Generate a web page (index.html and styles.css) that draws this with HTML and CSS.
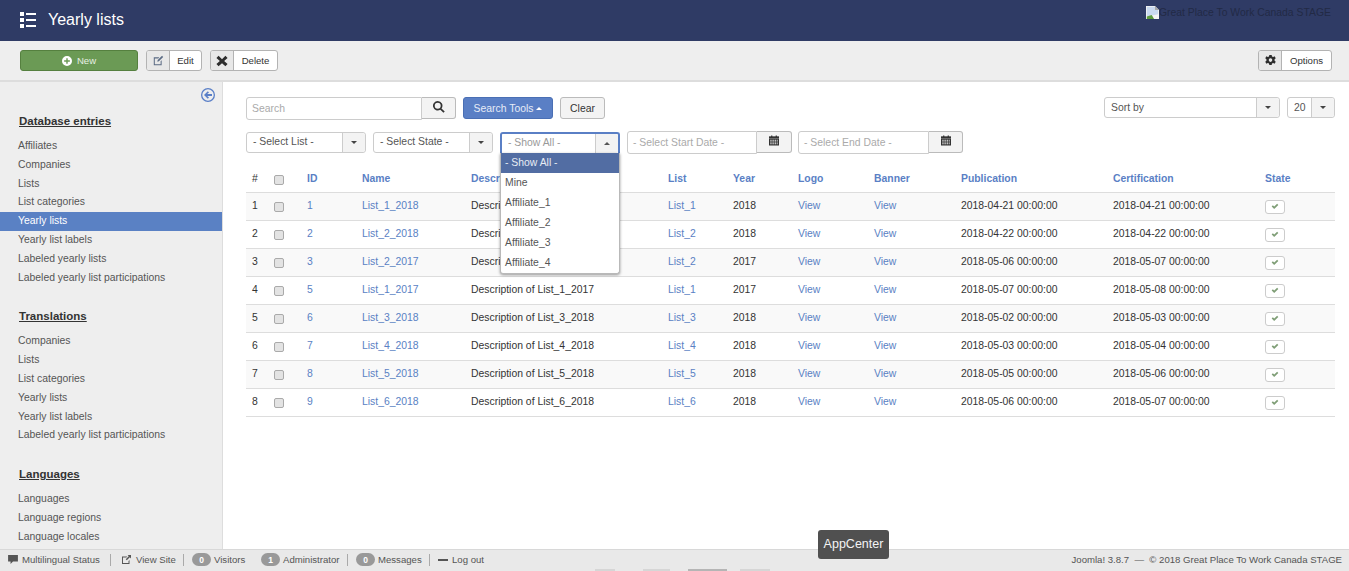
FILE: index.html
```html
<!DOCTYPE html>
<html lang="en">
<head>
  <meta charset="utf-8" />
  <title>Yearly lists</title>
  <link rel="stylesheet" href="styles.css">
</head>
<body>
<svg class="sprite" width="0" height="0">
  <symbol id="i-list" viewBox="0 0 16 16"><path d="M0 0h4v4H0zM0 6h4v4H0zM0 12h4v4H0zM6 1h10v2H6zM6 7h10v2H6zM6 13h10v2H6z"/></symbol>
  <symbol id="i-plus" viewBox="0 0 14 14"><path fill-rule="evenodd" d="M7 0a7 7 0 1 0 0 14A7 7 0 0 0 7 0zM6 3h2v3h3v2H8v3H6V8H3V6h3z"/></symbol>
  <symbol id="i-edit" viewBox="0 0 14 14"><path d="M1 3h7L6.700 4.300H2.300v7.400h7.400V8L11 6.700V13H1z"/><path d="M11.500 1L13 2.500 7.500 8 5.500 8.500 6 6.500z"/></symbol>
  <symbol id="i-x" viewBox="0 0 14 14"><path d="M3 1l4 4 4-4 2.500 2.500-4 3.500 4 3.500L11 13 7 9.500 3 13 .5 10.500l4-3.500-4-3.500z"/></symbol>
  <symbol id="i-gear" viewBox="0 0 14 14"><path fill-rule="evenodd" d="M5.500 0h3l.4 2 1.500.7L12.200 1.600l1.500 2.600-1.500 1.300v1.800l1.500 1.300-1.500 2.600-1.800-1.100-1.500.7-.4 2h-3l-.4-2-1.500-.7-1.800 1.100L.3 8.600 1.800 7.300V5.500L.3 4.200l1.500-2.600 1.800 1.100 1.500-.7zM7 4.200a2.300 2.300 0 1 0 0 4.600 2.300 2.300 0 0 0 0-4.600z"/></symbol>
  <symbol id="i-search" viewBox="0 0 14 14"><path fill-rule="evenodd" d="M5.500 0a5.500 5.500 0 0 1 4.400 8.800l3.800 3.500-1.500 1.500-3.700-3.700A5.500 5.500 0 1 1 5.500 0zm0 2a3.500 3.500 0 1 0 0 7 3.500 3.500 0 0 0 0-7z"/></symbol>
  <symbol id="i-cal" viewBox="0 0 12 12"><path d="M0 1h12v2.500H0z"/><path fill-rule="evenodd" d="M0 3.500h12V12H0zM1.500 5v1.200h1.700V5zm2.600 0v1.200h1.700V5zm2.600 0v1.200h1.700V5zm2.500 0v1.200h1.300V5zM1.500 7.200v1.200h1.700V7.200zm2.600 0v1.200h1.700V7.200zm2.600 0v1.200h1.700V7.200zm2.500 0v1.200h1.300V7.200zM1.500 9.400v1.200h1.700V9.400zm2.600 0v1.200h1.700V9.400zm2.600 0v1.200h1.700V9.400zm2.500 0v1.200h1.300V9.400z"/><path d="M2.500 0h1.500v2H2.500zM8 0h1.500v2H8z"/></symbol>
  <symbol id="i-check" viewBox="0 0 12 10"><path d="M1 5l1.800-1.800L4.800 5 9.200 .8 11 2.600 4.800 8.800z"/></symbol>
  <symbol id="i-back" viewBox="0 0 14 14"><path fill-rule="evenodd" d="M7 0a7 7 0 1 1 0 14A7 7 0 0 1 7 0zm0 1.300a5.700 5.700 0 1 0 0 11.400A5.700 5.700 0 0 0 7 1.300z"/><path d="M6.800 3.200l1.200 1.200L6.200 6H11v2H6.200L8 9.600l-1.200 1.200L3 7z"/></symbol>
  <symbol id="i-chat" viewBox="0 0 12 11"><path d="M0 0h12v8H6l-3 3V8H0z"/></symbol>
  <symbol id="i-out" viewBox="0 0 12 12"><path d="M0 2h7L5.800 3.300H1.300v7.400h7.400V8L10 6.700V12H0z"/><path d="M7.500 0H12v4.500l-1.600-1.400-4 4-1.400-1.400 4-4z"/></symbol>
</svg>

<div class="page">
  <header class="topbar">
    <svg class="topbar-icon"><use href="#i-list"/></svg>
    <h1 class="page-title">Yearly lists</h1>
    <div class="brand">
      <svg class="broken-img" viewBox="0 0 16 16">
        <path fill="#f4f4f4" d="M0 0h11l5 5v11H0z"/>
        <path fill="#c9d9f0" d="M1 1h10v4h4v5L1 13z"/>
        <path fill="#5c9a3c" d="M1 13l6-2 3 5H1z"/>
        <path fill="#a8a8a8" d="M11 0l5 5h-5z"/>
      </svg>
      <span>Great Place To Work Canada STAGE</span>
    </div>
  </header>

  <div class="toolbar">
    <button class="tool tool-new"><svg class="ico-plus"><use href="#i-plus"/></svg>New</button>
    <button class="tool tool-edit"><span class="tool-ico"><svg class="ico-edit"><use href="#i-edit"/></svg></span><span class="tool-txt">Edit</span></button>
    <button class="tool tool-delete"><span class="tool-ico"><svg class="ico-x"><use href="#i-x"/></svg></span><span class="tool-txt">Delete</span></button>
    <button class="tool tool-options"><span class="tool-ico"><svg class="ico-gear"><use href="#i-gear"/></svg></span><span class="tool-txt">Options</span></button>
  </div>

  <div class="body">
    <aside class="sidebar">
      <div class="collapse"><svg class="ico-back"><use href="#i-back"/></svg></div>
      <h3 class="nav-title">Database entries</h3>
      <ul class="nav">
        <li>Affiliates</li>
        <li>Companies</li>
        <li>Lists</li>
        <li>List categories</li>
        <li class="active">Yearly lists</li>
        <li>Yearly list labels</li>
        <li>Labeled yearly lists</li>
        <li>Labeled yearly list participations</li>
      </ul>
      <h3 class="nav-title">Translations</h3>
      <ul class="nav">
        <li>Companies</li>
        <li>Lists</li>
        <li>List categories</li>
        <li>Yearly lists</li>
        <li>Yearly list labels</li>
        <li>Labeled yearly list participations</li>
      </ul>
      <h3 class="nav-title">Languages</h3>
      <ul class="nav">
        <li>Languages</li>
        <li>Language regions</li>
        <li>Language locales</li>
      </ul>
    </aside>

    <main class="content">
      <div class="search-row">
        <div class="search-box">
          <div class="input search-input">Search</div>
          <div class="addon search-btn"><svg class="ico-search"><use href="#i-search"/></svg></div>
        </div>
        <button class="btn btn-primary">Search Tools <i class="caret-up white"></i></button>
        <button class="btn btn-clear">Clear</button>
        <div class="select sort-select"><span class="select-val">Sort by</span><span class="select-arrow"><i class="caret-down"></i></span></div>
        <div class="select limit-select"><span class="select-val">20</span><span class="select-arrow"><i class="caret-down"></i></span></div>
      </div>

      <div class="filter-row">
        <div class="select filter-select"><span class="select-val">- Select List -</span><span class="select-arrow"><i class="caret-down"></i></span></div>
        <div class="select filter-select"><span class="select-val">- Select State -</span><span class="select-arrow"><i class="caret-down"></i></span></div>
        <div class="filter-open">
          <div class="select filter-select is-open"><span class="select-val">- Show All -</span><span class="select-arrow"><i class="caret-up"></i></span></div>
          <ul class="dropdown">
            <li class="selected">- Show All -</li>
            <li>Mine</li>
            <li>Affiliate_1</li>
            <li>Affiliate_2</li>
            <li>Affiliate_3</li>
            <li>Affiliate_4</li>
          </ul>
        </div>
        <div class="date-box date-start">
          <div class="input date-input">- Select Start Date -</div>
          <div class="addon date-btn"><svg class="ico-cal"><use href="#i-cal"/></svg></div>
        </div>
        <div class="date-box date-end">
          <div class="input date-input">- Select End Date -</div>
          <div class="addon date-btn"><svg class="ico-cal"><use href="#i-cal"/></svg></div>
        </div>
      </div>

      <table class="grid">
        <colgroup>
          <col class="c-num"><col class="c-chk"><col class="c-id"><col class="c-name"><col class="c-desc"><col class="c-list"><col class="c-year"><col class="c-logo"><col class="c-banner"><col class="c-pub"><col class="c-cert"><col class="c-state">
        </colgroup>
        <thead>
          <tr>
            <th class="plain">#</th><th><input type="checkbox" class="chk chk-head"></th><th>ID</th><th>Name</th><th>Descr</th><th>List</th><th>Year</th><th>Logo</th><th>Banner</th><th>Publication</th><th>Certification</th><th>State</th>
          </tr>
        </thead>
        <tbody>
          <tr>
            <td>1</td><td><input type="checkbox" class="chk"></td><td><a>1</a></td><td><a>List_1_2018</a></td><td>Descri</td><td><a>List_1</a></td><td>2018</td><td><a>View</a></td><td><a>View</a></td><td>2018-04-21 00:00:00</td><td>2018-04-21 00:00:00</td><td><span class="state"><svg class="ico-check"><use href="#i-check"/></svg></span></td>
          </tr>
          <tr>
            <td>2</td><td><input type="checkbox" class="chk"></td><td><a>2</a></td><td><a>List_2_2018</a></td><td>Descri</td><td><a>List_2</a></td><td>2018</td><td><a>View</a></td><td><a>View</a></td><td>2018-04-22 00:00:00</td><td>2018-04-22 00:00:00</td><td><span class="state"><svg class="ico-check"><use href="#i-check"/></svg></span></td>
          </tr>
          <tr>
            <td>3</td><td><input type="checkbox" class="chk"></td><td><a>3</a></td><td><a>List_2_2017</a></td><td>Descri</td><td><a>List_2</a></td><td>2017</td><td><a>View</a></td><td><a>View</a></td><td>2018-05-06 00:00:00</td><td>2018-05-07 00:00:00</td><td><span class="state"><svg class="ico-check"><use href="#i-check"/></svg></span></td>
          </tr>
          <tr>
            <td>4</td><td><input type="checkbox" class="chk"></td><td><a>5</a></td><td><a>List_1_2017</a></td><td>Description of List_1_2017</td><td><a>List_1</a></td><td>2017</td><td><a>View</a></td><td><a>View</a></td><td>2018-05-07 00:00:00</td><td>2018-05-08 00:00:00</td><td><span class="state"><svg class="ico-check"><use href="#i-check"/></svg></span></td>
          </tr>
          <tr>
            <td>5</td><td><input type="checkbox" class="chk"></td><td><a>6</a></td><td><a>List_3_2018</a></td><td>Description of List_3_2018</td><td><a>List_3</a></td><td>2018</td><td><a>View</a></td><td><a>View</a></td><td>2018-05-02 00:00:00</td><td>2018-05-03 00:00:00</td><td><span class="state"><svg class="ico-check"><use href="#i-check"/></svg></span></td>
          </tr>
          <tr>
            <td>6</td><td><input type="checkbox" class="chk"></td><td><a>7</a></td><td><a>List_4_2018</a></td><td>Description of List_4_2018</td><td><a>List_4</a></td><td>2018</td><td><a>View</a></td><td><a>View</a></td><td>2018-05-03 00:00:00</td><td>2018-05-04 00:00:00</td><td><span class="state"><svg class="ico-check"><use href="#i-check"/></svg></span></td>
          </tr>
          <tr>
            <td>7</td><td><input type="checkbox" class="chk"></td><td><a>8</a></td><td><a>List_5_2018</a></td><td>Description of List_5_2018</td><td><a>List_5</a></td><td>2018</td><td><a>View</a></td><td><a>View</a></td><td>2018-05-05 00:00:00</td><td>2018-05-06 00:00:00</td><td><span class="state"><svg class="ico-check"><use href="#i-check"/></svg></span></td>
          </tr>
          <tr>
            <td>8</td><td><input type="checkbox" class="chk"></td><td><a>9</a></td><td><a>List_6_2018</a></td><td>Description of List_6_2018</td><td><a>List_6</a></td><td>2018</td><td><a>View</a></td><td><a>View</a></td><td>2018-05-06 00:00:00</td><td>2018-05-07 00:00:00</td><td><span class="state"><svg class="ico-check"><use href="#i-check"/></svg></span></td>
          </tr>
        </tbody>
      </table>
    </main>
  </div>

  <footer class="status">
    <div class="st-item st-multi"><svg class="ico-chat"><use href="#i-chat"/></svg>Multilingual Status</div>
    <div class="st-item st-site"><svg class="ico-out"><use href="#i-out"/></svg>View Site</div>
    <div class="st-item st-users">
      <span class="badge">0</span><span class="badge-label st-visitors">Visitors</span>
      <span class="badge">1</span><span class="badge-label">Administrator</span>
    </div>
    <div class="st-item st-msg"><span class="badge">0</span><span class="badge-label">Messages</span></div>
    <div class="st-item st-logout"><i class="minus"></i>Log out</div>
    <div class="st-copy">Joomla! 3.8.7 &nbsp;&mdash;&nbsp; &copy; 2018 Great Place To Work Canada STAGE</div>
  </footer>

  <div class="tooltip">AppCenter</div>
  <div class="dock">
    <i class="dock-item"></i>
    <i class="dock-item"></i>
    <i class="dock-item"></i>
    <i class="dock-item"></i>
  </div>
</div>
</body>
</html>
```

FILE: styles.css
```css
*{margin:0;padding:0;box-sizing:border-box;}
html,body{height:100%;overflow:hidden;}
body{font-family:"Liberation Sans",Arial,sans-serif;font-size:12px;color:#333;background:#fff;}
svg{fill:currentColor;display:block;}
ul{list-style:none;}
.sprite{position:absolute;}
.page{position:relative;display:flex;flex-direction:column;height:571px;overflow:hidden;}

/* top bar */
.topbar{display:flex;align-items:center;height:41px;flex:none;padding:0 18px 2px 20px;background:#2f3b65;color:#fff;}
.topbar-icon{width:16px;height:16px;margin-right:12px;}
.page-title{font-size:16px;font-weight:400;line-height:20px;}
.brand{display:flex;align-items:flex-start;align-self:flex-start;margin:6px 0 0 auto;color:#222a45;font-size:10.400px;line-height:13px;}
.broken-img{width:13px;height:13px;}

/* toolbar */
.toolbar{display:flex;align-items:center;height:41px;flex:none;padding:0 17px 0 20px;background:#eee;border-bottom:2px solid #ddd;}
.tool{display:flex;height:21px;margin-right:8px;border:1px solid #b3b3b3;border-radius:3px;background:#fff;font:9.600px "Liberation Sans",Arial,sans-serif;color:#333;overflow:hidden;}
.tool-new{align-items:center;justify-content:center;width:118px;background:#6b9a55;border-color:#55803f;color:#e8f0e4;}
.ico-plus{width:10px;height:10px;margin-right:5px;color:#fff;}
.tool-ico{display:flex;align-items:center;justify-content:center;width:23px;background:#e8e8e8;border-right:1px solid #b3b3b3;color:#5b6b84;}
.tool-txt{display:flex;align-items:center;flex:1;justify-content:center;}
.tool-edit{width:56px;}
.tool-delete{width:68px;}
.tool-delete .tool-ico{color:#2d2d2d;}
.tool-options{width:74px;margin:0 0 0 auto;}
.tool-options .tool-ico{color:#2d2d2d;}
.ico-edit{width:11px;height:11px;}
.ico-x{width:12px;height:12px;}
.ico-gear{width:11px;height:11px;}

/* layout under the toolbar */
.body{display:flex;flex:1;min-height:0;}

/* sidebar */
.sidebar{width:223px;flex:none;padding-top:6px;background:#eee;border-right:1px solid #ddd;overflow:hidden;}
.collapse{display:flex;justify-content:flex-end;padding-right:7px;color:#5a7fc7;}
.ico-back{width:14px;height:14px;}
.nav-title{margin:12px 0 0 19px;font-size:11.500px;line-height:15px;font-weight:700;color:#333;text-decoration:underline;}
.nav{margin:8px 0 22px;}
.nav li{height:18.800px;padding-left:18px;font-size:10.400px;line-height:18.800px;color:#555;white-space:nowrap;}
.nav li.active{background:#5a81c4;color:#fff;}

/* main area */
.content{flex:1;min-width:0;padding:15px 14px 0 23px;}
.search-row{display:flex;align-items:flex-start;height:22px;}
.filter-row{display:flex;align-items:flex-start;height:22px;margin-top:13px;}
.input{height:23px;padding:0 5px;border:1px solid #ccc;border-radius:3px 0 0 3px;background:#fff;font-size:10.400px;line-height:21px;color:#aaa;}
.addon{display:flex;align-items:center;justify-content:center;height:22px;border:1px solid #bbb;border-left:0;border-radius:0 3px 3px 0;background:#f3f3f3;color:#333;}
.search-box{display:flex;width:210px;}
.search-input{width:176px;}
.search-btn{width:34px;}
.ico-search{width:12px;height:12px;margin-top:-3px;}
.btn{height:22px;border-radius:3px;font:10.400px "Liberation Sans",Arial,sans-serif;}
.btn-primary{width:90px;margin-left:7px;background:#5a7fc5;border:1px solid #4a6fb4;color:#e6ecf7;}
.btn-clear{width:45px;margin-left:7px;background:#f3f3f3;border:1px solid #bbb;color:#333;}
.select{display:flex;height:21px;border:1px solid #ccc;border-radius:3px;background:#fff;font-size:10.400px;line-height:19px;color:#555;}
.select-val{flex:1;padding-left:6px;white-space:nowrap;}
.select-arrow{display:flex;align-items:center;justify-content:center;width:23px;background:#f3f3f3;border-left:1px solid #ccc;border-radius:0 3px 3px 0;}
.sort-select{width:176px;margin-left:auto;}
.limit-select{width:48px;margin-left:7px;}
.filter-select{width:120px;margin-right:7px;line-height:17px;}
.filter-open{position:relative;}
.is-open{border:1px solid #5a7fc5;border-width:2px 2px 0;border-radius:3px 3px 0 0;color:#999;}
.dropdown{position:absolute;z-index:5;top:21px;left:0;width:120px;background:#fff;border:1px solid #b9b9b9;border-top:0;border-radius:0 0 3px 3px;box-shadow:0 1px 3px rgba(0,0,0,.4);font-size:10.400px;color:#555;}
.dropdown li{height:20px;padding-left:4px;line-height:19px;}
.dropdown .selected{background:#526da3;color:#e8ecf4;}
.date-box{display:flex;margin-top:-1px;}
.date-start{width:165px;margin-right:6px;}
.date-end{width:165px;}
.date-input{flex:1;padding-left:5px;color:#aaa;}
.date-btn{width:35px;}
.date-end .date-btn{width:34px;}
.ico-cal{width:10px;height:11px;margin-top:-4px;}
.caret-down,.caret-up{display:block;width:0;height:0;border-left:3.500px solid transparent;border-right:3.500px solid transparent;}
.caret-down{border-top:3.500px solid #444;}
.caret-up{border-bottom:3.500px solid #555;}
.white{display:inline-block;margin-bottom:2px;border-bottom-color:#fff;}

/* table */
.grid{width:1089px;margin-top:14px;table-layout:fixed;border-collapse:collapse;font-size:10.400px;color:#333;}
.c-num{width:22px;}
.c-chk{width:33px;}
.c-id{width:55px;}
.c-name{width:109px;}
.c-desc{width:197px;}
.c-list{width:65px;}
.c-year{width:65px;}
.c-logo{width:76px;}
.c-banner{width:87px;}
.c-pub{width:152px;}
.c-cert{width:152px;}
.c-state{width:76px;}
.grid th{height:24px;padding:0 6px 2px;text-align:left;font-weight:700;color:#5a7fc5;border-bottom:1px solid #ddd;white-space:nowrap;overflow:hidden;}
.grid th.plain{color:#333;font-weight:400;}
.grid td{height:28px;padding:0 6px 2px;border-bottom:1px solid #ddd;white-space:nowrap;overflow:hidden;}
.grid tbody tr:nth-child(odd){background:#f9f9f9;}
.grid a{color:#5a81c4;}
.chk{display:block;width:10px;height:10px;margin-top:4px;appearance:none;background:#e3e3e3;border:1px solid #aaa;border-radius:2px;}
.chk-head{margin-top:3px;}
.state{display:flex;align-items:center;justify-content:center;width:20px;height:14px;margin-top:3px;background:#fff;border:1px solid #ccc;border-radius:3px;color:#7f9e76;}
.ico-check{width:8px;height:7px;}

/* status bar */
.status{display:flex;align-items:center;flex:none;height:22px;padding-bottom:2px;background:#e9e9e9;border-top:1px solid #d8d8d8;font-size:9.600px;color:#555;white-space:nowrap;}
.st-item{display:flex;align-items:center;height:12px;border-right:1px solid #aaa;}
.st-multi{width:111px;padding-left:8px;}
.ico-chat{width:10px;height:9px;margin-right:4px;}
.st-site{width:73px;padding-left:11px;}
.ico-out{width:9px;height:9px;margin-right:5px;}
.st-users{width:164px;padding-left:8px;}
.st-msg{width:82px;padding-left:8px;}
.st-logout{padding-left:8px;border-right:0;}
.badge{display:flex;align-items:center;justify-content:center;width:19px;height:13px;border-radius:7px;background:#999;color:#fff;font-weight:700;font-size:8.500px;}
.badge-label{margin-left:3px;}
.st-visitors{width:47px;}
.minus{width:10px;height:2px;margin-right:4px;background:#555;}
.st-copy{margin-left:auto;padding-right:7px;}

/* dock behind the window edge */
.tooltip{position:absolute;z-index:9;left:818px;top:530px;width:71px;height:29px;border-radius:3px;background:#505050;color:#f4f4f4;font-size:12.500px;line-height:29px;text-align:center;}
.dock{position:absolute;left:595px;bottom:0;display:flex;height:2px;filter:blur(.6px);}
.dock-item{display:block;width:20px;background:#d6d6d6;}
.dock-item:nth-child(2){width:27px;margin-left:28px;}
.dock-item:nth-child(3){width:39px;margin-left:18px;background:#b5b5b5;}
.dock-item:nth-child(4){width:30px;margin-left:13px;}
```
